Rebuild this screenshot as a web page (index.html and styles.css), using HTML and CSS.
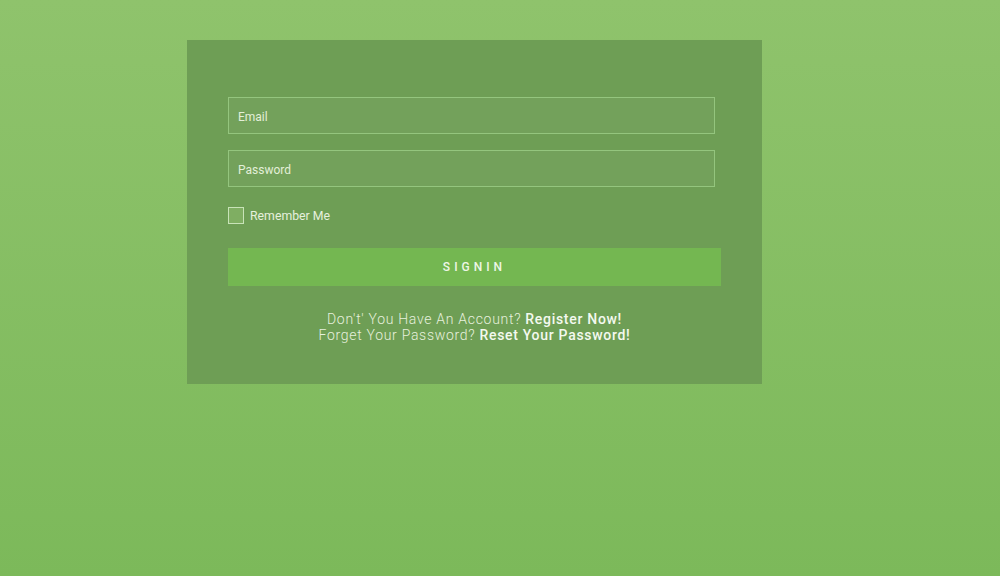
FILE: index.html
```html
<!DOCTYPE html>
<html lang="en">
<head>
<meta charset="utf-8">
<title>Sign In</title>
<link rel="stylesheet" href="styles.css">
</head>
<body>
<div class="page">
  <form class="card">
    <input class="field" type="text" placeholder="Email">
    <input class="field" type="password" placeholder="Password">
    <label class="remember"><span class="box"></span><span>Remember Me</span></label>
    <button class="signin" type="button">SIGNIN</button>
    <div class="links">
      <p>Don't' You Have An Account? <b>Register Now!</b></p>
      <p>Forget Your Password? <b>Reset Your Password!</b></p>
    </div>
  </form>
</div>
</body>
</html>
```
FILE: styles.css
```css
html, body {
  margin: 0;
  padding: 0;
  height: 100%;
}
body {
  font-family: Roboto, "Liberation Sans", sans-serif;
  background: linear-gradient(to bottom, #8fc36c 0%, #7cb95a 100%);
  color: #eaf3e2;
}
.page {
  padding: 40px 0 0 187px;
}
.card {
  box-sizing: border-box;
  width: 575px;
  height: 344px;
  background: #6e9e55;
  padding: 57px 41px 0 41px;
  display: flex;
  flex-direction: column;
}
.field {
  box-sizing: border-box;
  width: 487px;
  height: 37px;
  margin: 0 0 16px 0;
  background: rgba(255,255,255,0.04);
  border: 1px solid #94c57e;
  padding: 2px 9px 0 9px;
  font-family: Roboto, "Liberation Sans", sans-serif;
  font-size: 12px;
  color: #eaf3e2;
  outline: none;
}
.field::placeholder {
  color: #e3efd9;
}
.remember {
  display: flex;
  align-items: center;
  gap: 6px;
  font-size: 12.3px;
  color: #e6f0dd;
  margin-top: 4px;
  height: 17px;
}
.box {
  box-sizing: border-box;
  width: 16px;
  height: 17px;
  border: 1px solid #c8e3b8;
  background: #7fae62;
}
.signin {
  margin-top: 24px;
  height: 38px;
  width: 493px;
  border: none;
  background: #74b751;
  color: #eef6e6;
  font-family: Roboto, "Liberation Sans", sans-serif;
  font-size: 12px;
  font-weight: 500;
  letter-spacing: 4px;
  padding: 0;
}
.links {
  margin-top: 25px;
  text-align: center;
  font-size: 14px;
  font-weight: 300;
  line-height: 16px;
  letter-spacing: 0.7px;
  color: #e6f0dd;
}
.links p {
  margin: 0;
}
.links b {
  font-weight: 500;
  color: #f4f9ef;
}
```
